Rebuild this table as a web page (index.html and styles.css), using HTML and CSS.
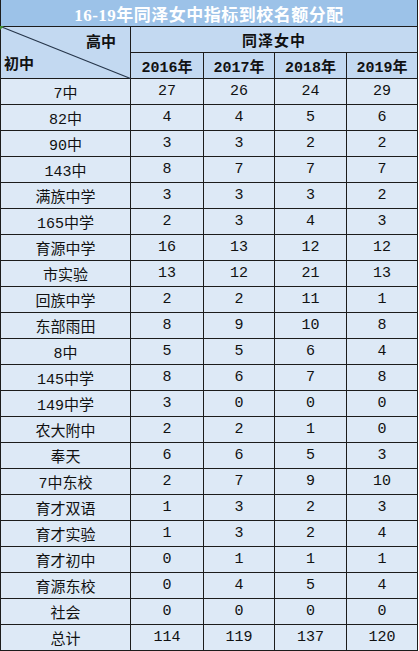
FILE: index.html
```html
<!DOCTYPE html>
<html lang="zh">
<head>
<meta charset="utf-8">
<title>16-19年同泽女中指标到校名额分配</title>
<link rel="stylesheet" href="styles.css">
</head>
<body>
<div class="sheet">
  <div class="title">16-19年同泽女中指标到校名额分配</div>
  <div class="corner">
    <svg class="diag" width="131" height="53" viewBox="0 0 131 53"><line x1="0.5" y1="0.5" x2="130.5" y2="52.5" stroke="#27364a" stroke-width="1.1"/></svg>
    <span class="mark"></span>
    <span class="hi">高中</span>
    <span class="lo">初中</span>
  </div>
  <div class="head group">同泽女中</div>
  <div class="head year">2016年</div>
  <div class="head year">2017年</div>
  <div class="head year">2018年</div>
  <div class="head year">2019年</div>

  <div class="cell">7中</div><div class="cell">27</div><div class="cell">26</div><div class="cell">24</div><div class="cell">29</div>
  <div class="cell">82中</div><div class="cell">4</div><div class="cell">4</div><div class="cell">5</div><div class="cell">6</div>
  <div class="cell">90中</div><div class="cell">3</div><div class="cell">3</div><div class="cell">2</div><div class="cell">2</div>
  <div class="cell">143中</div><div class="cell">8</div><div class="cell">7</div><div class="cell">7</div><div class="cell">7</div>
  <div class="cell">满族中学</div><div class="cell">3</div><div class="cell">3</div><div class="cell">3</div><div class="cell">2</div>
  <div class="cell">165中学</div><div class="cell">2</div><div class="cell">3</div><div class="cell">4</div><div class="cell">3</div>
  <div class="cell">育源中学</div><div class="cell">16</div><div class="cell">13</div><div class="cell">12</div><div class="cell">12</div>
  <div class="cell">市实验</div><div class="cell">13</div><div class="cell">12</div><div class="cell">21</div><div class="cell">13</div>
  <div class="cell">回族中学</div><div class="cell">2</div><div class="cell">2</div><div class="cell">11</div><div class="cell">1</div>
  <div class="cell">东部雨田</div><div class="cell">8</div><div class="cell">9</div><div class="cell">10</div><div class="cell">8</div>
  <div class="cell">8中</div><div class="cell">5</div><div class="cell">5</div><div class="cell">6</div><div class="cell">4</div>
  <div class="cell">145中学</div><div class="cell">8</div><div class="cell">6</div><div class="cell">7</div><div class="cell">8</div>
  <div class="cell">149中学</div><div class="cell">3</div><div class="cell">0</div><div class="cell">0</div><div class="cell">0</div>
  <div class="cell">农大附中</div><div class="cell">2</div><div class="cell">2</div><div class="cell">1</div><div class="cell">0</div>
  <div class="cell">奉天</div><div class="cell">6</div><div class="cell">6</div><div class="cell">5</div><div class="cell">3</div>
  <div class="cell">7中东校</div><div class="cell">2</div><div class="cell">7</div><div class="cell">9</div><div class="cell">10</div>
  <div class="cell">育才双语</div><div class="cell">1</div><div class="cell">3</div><div class="cell">2</div><div class="cell">3</div>
  <div class="cell">育才实验</div><div class="cell">1</div><div class="cell">3</div><div class="cell">2</div><div class="cell">4</div>
  <div class="cell">育才初中</div><div class="cell">0</div><div class="cell">1</div><div class="cell">1</div><div class="cell">1</div>
  <div class="cell">育源东校</div><div class="cell">0</div><div class="cell">4</div><div class="cell">5</div><div class="cell">4</div>
  <div class="cell">社会</div><div class="cell">0</div><div class="cell">0</div><div class="cell">0</div><div class="cell">0</div>
  <div class="cell">总计</div><div class="cell">114</div><div class="cell">119</div><div class="cell">137</div><div class="cell">120</div>
</div>
</body>
</html>
```
FILE: styles.css
```css
html, body {
  margin: 0;
  padding: 0;
  background: #ffffff;
}

.sheet {
  display: grid;
  grid-template-columns: 129px 72px 70px 71px 70px;
  grid-template-rows: 26px 25px 25px;
  grid-auto-rows: 25px;
  gap: 1px;
  padding: 0 1px 1px 1px;
  width: 416px;
  background: #1c1c1c;
  font-family: "Liberation Mono", "Noto Sans CJK SC", monospace;
  color: #111111;
}

.title {
  grid-column: 1 / 6;
  background: #9cc2e8;
  color: #ffffff;
  font-family: "Liberation Serif", "Noto Sans CJK SC", serif;
  font-weight: bold;
  font-size: 17px;
  display: flex;
  align-items: center;
  justify-content: center;
  letter-spacing: 0.5px;
}

.corner {
  grid-row: 2 / 4;
  grid-column: 1;
  position: relative;
  background: #c3d9f1;
  display: flex;
  flex-direction: column;
  justify-content: space-between;
  padding: 5px 14px 6px 3px;
  font-family: "Noto Sans CJK SC", sans-serif;
  font-weight: bold;
  font-size: 15px;
  line-height: 18px;
}

.diag {
  position: absolute;
  left: -1px;
  top: -1px;
}

.mark {
  position: absolute;
  left: -1px;
  top: -1px;
  width: 0;
  height: 0;
  border-top: 4px solid #3f8a2e;
  border-right: 4px solid transparent;
}

.hi {
  align-self: flex-end;
  position: relative;
}

.lo {
  align-self: flex-start;
  position: relative;
}

.head {
  background: #c3d9f1;
  display: flex;
  align-items: center;
  justify-content: center;
  font-weight: bold;
  font-size: 15px;
}

.group {
  grid-column: 2 / 6;
  font-family: "Noto Sans CJK SC", sans-serif;
  letter-spacing: 1px;
}

.cell {
  background: #dde9f6;
  display: flex;
  align-items: center;
  justify-content: center;
  font-size: 15px;
}
```
